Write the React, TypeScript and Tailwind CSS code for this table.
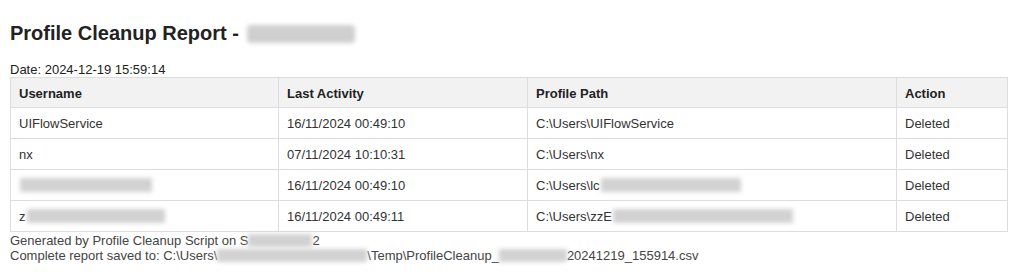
export default function App() {
  const rows = [
    { user: "UIFlowService", userBlur: 0, last: "16/11/2024 00:49:10", path: "C:\\Users\\UIFlowService", pathBlur: 0 },
    { user: "nx", userBlur: 0, last: "07/11/2024 10:10:31", path: "C:\\Users\\nx", pathBlur: 0 },
    { user: "", userBlur: 132, last: "16/11/2024 00:49:10", path: "C:\\Users\\lc", pathBlur: 140 },
    { user: "z", userBlur: 138, last: "16/11/2024 00:49:11", path: "C:\\Users\\zzE", pathBlur: 180 },
  ];

  return (
    <div className="bg-white min-h-screen px-[10px] pt-[22px] text-[#333] font-['Liberation_Sans',Arial,sans-serif]">
      <h2 className="text-[20px] leading-[23px] font-bold text-[#222] flex items-center">
        Profile Cleanup Report -
        <span className="ml-[8px] inline-block w-[108px] h-[18px] rounded-sm bg-[#cfcfcf] blur-[2px]" />
      </h2>
      <div className="mt-[17px] text-[13px] leading-[15px] text-[#222]">Date: 2024-12-19 15:59:14</div>
      <table className="w-[997px] table-fixed border-collapse text-[13px] leading-[15px]">
        <colgroup>
          <col className="w-[268px]" />
          <col className="w-[249px]" />
          <col className="w-[369px]" />
          <col className="w-[111px]" />
        </colgroup>
        <thead>
          <tr className="bg-[#f2f2f2] text-[#222]">
            <th className="border border-[#ddd] px-[8px] pt-[1px] h-[30px] text-left font-bold">Username</th>
            <th className="border border-[#ddd] px-[8px] pt-[1px] h-[30px] text-left font-bold">Last Activity</th>
            <th className="border border-[#ddd] px-[8px] pt-[1px] h-[30px] text-left font-bold">Profile Path</th>
            <th className="border border-[#ddd] px-[8px] pt-[1px] h-[30px] text-left font-bold">Action</th>
          </tr>
        </thead>
        <tbody>
          {rows.map((r, i) => (
            <tr key={i}>
              <td className="border border-[#ddd] px-[8px] h-[31px]">
                <span className="flex items-center">
                  {r.user}
                  {r.userBlur > 0 && (
                    <span
                      className="inline-block h-[14px] bg-[#d2d2d2] blur-[2px] ml-[1px]"
                      style={{ width: r.userBlur }}
                    />
                  )}
                </span>
              </td>
              <td className="border border-[#ddd] px-[8px] h-[31px]">{r.last}</td>
              <td className="border border-[#ddd] px-[8px] h-[31px]">
                <span className="flex items-center">
                  {r.path}
                  {r.pathBlur > 0 && (
                    <span
                      className="inline-block h-[14px] bg-[#d2d2d2] blur-[2px] ml-[1px]"
                      style={{ width: r.pathBlur }}
                    />
                  )}
                </span>
              </td>
              <td className="border border-[#ddd] px-[8px] h-[31px]">Deleted</td>
            </tr>
          ))}
        </tbody>
      </table>
      <div className="text-[13px] leading-[15px] text-[#444] mt-[1px]">
        <div className="flex items-center">
          Generated by Profile Cleanup Script on S
          <span className="inline-block w-[64px] h-[13px] bg-[#d2d2d2] blur-[2px]" />
          2
        </div>
        <div className="flex items-center">
          Complete report saved to: C:\Users\
          <span className="inline-block w-[150px] h-[13px] bg-[#d2d2d2] blur-[2px]" />
          \Temp\ProfileCleanup_
          <span className="inline-block w-[68px] h-[13px] bg-[#d2d2d2] blur-[2px]" />
          20241219_155914.csv
        </div>
      </div>
    </div>
  );
}
